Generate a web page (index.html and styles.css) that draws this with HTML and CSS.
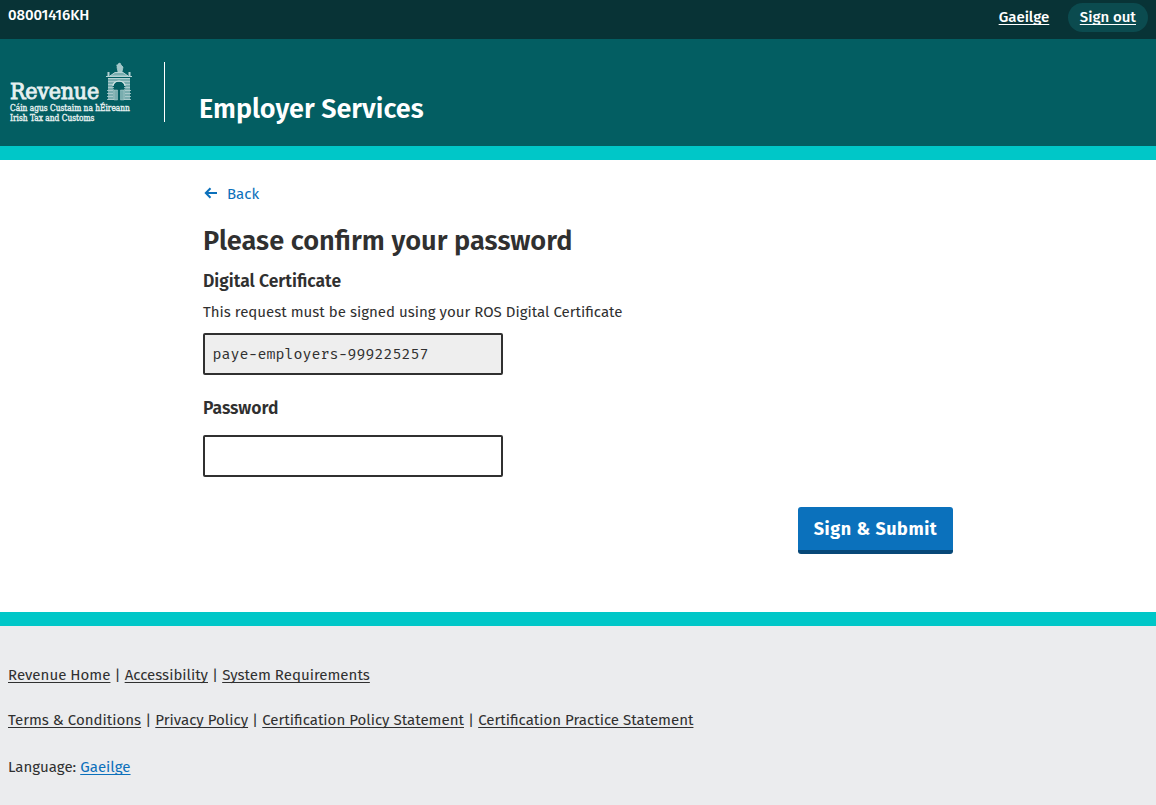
FILE: index.html
```html
<!DOCTYPE html>
<html lang="en">
<head>
<meta charset="utf-8">
<title>Employer Services</title>
<link rel="stylesheet" href="styles.css">
</head>
<body>
<div class="topbar">
  <span class="customer">08001416KH</span>
  <nav class="topnav"><a class="toplink" href="#">Gaeilge</a><a class="toplink signout" href="#">Sign out</a></nav>
</div>
<header class="header">
  <div class="brand">
    <div class="brand-row">
      <span class="brand-name">Revenue</span>
      <svg class="arch" width="26" height="40" viewBox="0 0 26 40" fill="none" stroke="#b5d2d3">
        <path d="M12 10l-1-5 1-3 2-1 1 2 2 2-1 5zM10 3l2 1" fill="#a3c6c8" stroke-width=".7"/>
        <path d="M4 14l5-3.500h8l5 3.500z" fill="#79adaf" stroke-width="1"/>
        <path d="M0 14.500h26M2 16.500h22" stroke-width="1"/>
        <path d="M2.500 10v4M23.500 10v4" stroke-width="2"/>
        <path d="M2 17v21h6V27a2 2 0 0 1-1-3 6 5 0 0 1 12 0 2 2 0 0 1-1 3v11h6V17z" fill="#79adaf" stroke="none"/>
        <path d="M2 19.500h22M2 22.500h5M19 22.500h5M2 25.500h6M18 25.500h6M1 28.500h6M19 28.500h6M1 31.500h6M19 31.500h6M1 34.500h6M19 34.500h6M1 37.500h7M18 37.500h7" stroke-width=".8"/>
        <path d="M7 24a6 5 0 0 1 12 0" stroke="#d5e7e7" stroke-width="1.200"/>
        <path d="M8 28h3.500v10H8zM14.500 28H18v10h-3.500z" fill="#79adaf" stroke-width=".5"/>
      </svg>
    </div>
    <div class="brand-sub brand-ga">Cáin agus Custaim na hÉireann</div>
    <div class="brand-sub brand-en">Irish Tax and Customs</div>
  </div>
  <div class="divider"></div>
  <div class="service">Employer Services</div>
</header>
<main class="main">
  <a class="back" href="#"><svg class="arrow" width="14" height="12" viewBox="0 0 14 12" fill="none" stroke="#0b70bb" stroke-width="2"><path d="M13 6H2M6.500 1.200L1.800 6l4.700 4.800"/></svg><span>Back</span></a>
  <h1 class="title">Please confirm your password</h1>
  <h2 class="label label-cert">Digital Certificate</h2>
  <p class="hint">This request must be signed using your ROS Digital Certificate</p>
  <div class="field field-readonly">paye-employers-999225257</div>
  <h2 class="label label-pass">Password</h2>
  <input class="field field-pass" type="password" aria-label="Password">
  <div class="actions"><button class="submit">Sign &amp; Submit</button></div>
</main>
<footer class="footer">
  <div class="foot-row"><a href="#">Revenue Home</a><i>|</i><a href="#">Accessibility</a><i>|</i><a href="#">System Requirements</a></div>
  <div class="foot-row"><a href="#">Terms &amp; Conditions</a><i>|</i><a href="#">Privacy Policy</a><i>|</i><a href="#">Certification Policy Statement</a><i>|</i><a href="#">Certification Practice Statement</a></div>
  <div class="foot-row foot-lang"><span>Language:</span><a class="lang" href="#">Gaeilge</a></div>
</footer>
</body>
</html>
```

FILE: styles.css
```css
* { box-sizing: border-box; }
body { margin: 0; background: #fff; color: #303030; font: 15px/20px "Fira Sans", "Noto Sans", sans-serif; }
a { text-underline-offset: 2px; text-decoration-skip-ink: none; text-decoration-thickness: 1px; }
.topbar { height: 39px; background: #083336; color: #fff; display: flex; justify-content: space-between; padding: 3px 8px 0; font-weight: 500; }
.customer { padding-top: 2px; letter-spacing: -.1px; }
.topnav { display: flex; gap: 18.500px; }
.toplink { color: #fff; height: 29px; line-height: 28px; }
.signout { background: #0b4b4f; border-radius: 15px; padding: 0 12px; }
.header { height: 121px; background: #035e62; border-bottom: 14px solid #00c7c8; display: flex; padding: 23px 10px 0; color: #fff; }
.brand { width: 154px; font-family: "DejaVu Serif Condensed", "DejaVu Serif", serif; font-stretch: condensed; color: #e5f0f0; }
.brand-row { display: flex; height: 40px; gap: 7px; }
.brand-name { width: 89px; font-size: 23px; line-height: 28px; padding-top: 15px; letter-spacing: -.25px; -webkit-text-stroke: .9px #e5f0f0; white-space: nowrap; }
.brand-sub { font-size: 8.300px; line-height: 10px; height: 10px; padding-top: 1px; -webkit-text-stroke: .35px #e5f0f0; white-space: nowrap; }
.divider { width: 1px; height: 60px; background: #fff; }
.service { margin-left: 34px; padding-top: 29px; font-size: 27px; line-height: 36px; font-weight: 600; white-space: nowrap; }
.main { height: 452px; width: 750px; margin: 0 auto; padding-top: 24px; }
.back { display: flex; align-items: center; gap: 9px; height: 20px; color: #0b70bb; text-decoration: none; }
.arrow { margin: 0 0 3px 1px; }
.title { margin: 19px 0 0; font-size: 27.200px; line-height: 36px; font-weight: 600; white-space: nowrap; }
.label { margin: 0; font-size: 17.500px; line-height: 24px; font-weight: 600; }
.label-cert { margin-top: 11px; }
.hint { margin: 8px 0 11px; white-space: nowrap; font-size: 15.040px; }
.field { display: block; width: 300px; height: 42px; border: 2px solid #303030; border-radius: 2px; padding: 0 7.500px; background: #fff; line-height: 38px; }
.field-readonly { background: #eee; font-family: "Fira Mono", "DejaVu Sans Mono", monospace; font-size: 15px; }
.label-pass { margin: 22px 0 14px; }
.actions { display: flex; justify-content: flex-end; margin-top: 30px; }
.submit { width: 155px; height: 47px; border: 0; border-bottom: 4px solid #074878; border-radius: 3px; background: #0b71bc; color: #fff; font: 700 18px/42px "Fira Sans", "Noto Sans", sans-serif; letter-spacing: .55px; padding: 0; white-space: nowrap; }
.footer { height: 193px; background: #ebecee; border-top: 14px solid #00c7c8; padding: 39px 8px 0; font-size: 15.060px; }
.foot-row { display: flex; height: 20px; margin-bottom: 25px; white-space: nowrap; }
.foot-row a { color: #303030; }
.foot-row i { font-style: normal; width: 14.200px; text-align: center; }
.foot-lang { margin-top: 27px; gap: 4px; }
.foot-row .lang { color: #0b70bb; }
```
